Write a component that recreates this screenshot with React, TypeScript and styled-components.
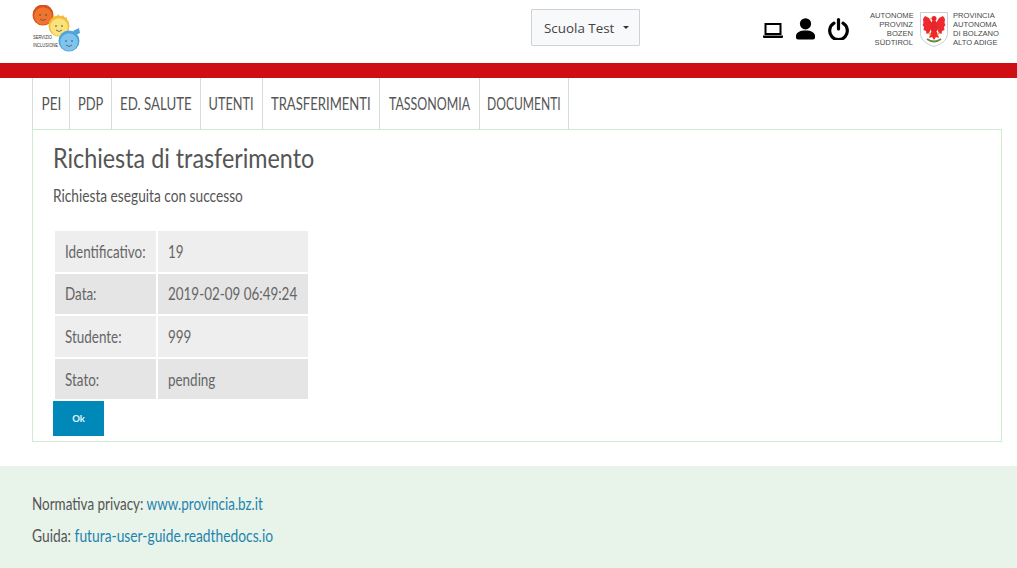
import React from "react";
import styled, { createGlobalStyle } from "styled-components";

const Global = createGlobalStyle`
  html, body { margin: 0; padding: 0; background: #fff; }
  body { font-family: "Lato", "Roboto", "Liberation Sans", sans-serif; color: #555; }
  * { box-sizing: border-box; }
`;

const Page = styled.div`
  width: 1017px;
  height: 568px;
  display: flex;
  flex-direction: column;
  overflow: hidden;
`;
const Header = styled.header`
  height: 63px;
  display: flex;
  align-items: flex-start;
  padding-left: 32px;
`;
const LogoBox = styled.svg`
  width: 50px;
  height: 50px;
  margin-top: 5px;
  flex: none;
`;
const SchoolButton = styled.button`
  margin: 9px 0 0 449px;
  width: 109px;
  height: 37px;
  background: #f8f9fa;
  border: 1px solid #cfd2d4;
  border-radius: 1px;
  display: flex;
  align-items: center;
  padding: 0 0 0 12px;
  font-family: "Open Sans", "Liberation Sans", sans-serif;
  font-size: 13.4px;
  color: #444;
  &::after {
    content: "";
    margin-left: 9px;
    border-top: 3.5px solid #333;
    border-left: 3px solid transparent;
    border-right: 3px solid transparent;
  }
`;
const IconRow = styled.div`
  display: flex;
  align-items: center;
  gap: 13px;
  margin: 18px 0 0 123px;
  height: 22px;
`;
const LaptopSvg = styled.svg`
  margin-top: 3px;
`;
const Province = styled.div`
  margin: 11px 0 0 21px;
  display: flex;
  align-items: center;
  gap: 7px;
  font-family: "Liberation Sans", sans-serif;
  font-size: 7.6px;
  line-height: 9px;
  color: #4a4a4a;
  white-space: pre;
`;
const ProvinceText = styled.div<{ $right?: boolean }>`
  width: 43px;
  margin-left: ${(p) => (p.$right ? "0" : "-2px")};
  text-align: ${(p) => (p.$right ? "right" : "left")};
`;
const RedBar = styled.div`
  height: 15px;
  background: #cf0d15;
  flex: none;
`;
const Main = styled.main`
  padding: 0 15px 0 32px;
  flex: 1;
`;
const Tabs = styled.nav`
  display: flex;
  height: 51px;
  border-left: 1px solid #d8dcd9;
`;
const Tab = styled.a<{ $w: number }>`
  width: ${(p) => p.$w}px;
  border-right: 1px solid #d8dcd9;
  display: flex;
  align-items: center;
  justify-content: center;
  font-size: 17px;
  color: #555;
  padding-bottom: 1px;
  white-space: nowrap;
`;
const TabLabel = styled.span<{ $sx: number }>`
  display: inline-block;
  transform: scaleX(${(p) => p.$sx});
`;
const Panel = styled.section`
  height: 313px;
  border: 1px solid #d0ebd3;
  padding: 12px 20px 0;
`;
const Title = styled.h1`
  margin: 0;
  font-size: 26px;
  line-height: 32px;
  font-weight: 400;
  color: #555;
  white-space: nowrap;
  transform: scaleX(0.897);
  transform-origin: left center;
`;
const Lead = styled.p`
  margin: 12px 0 0;
  font-size: 16.5px;
  line-height: 20px;
  color: #555;
  white-space: nowrap;
  transform: scaleX(0.83);
  transform-origin: left center;
`;
const Table = styled.table`
  margin-top: 23px;
  border-collapse: separate;
  border-spacing: 2px;
  table-layout: fixed;
  width: 257px;
  font-size: 17px;
  color: #666;
`;
const Row = styled.tr<{ $dark?: boolean }>`
  height: 40.6px;
  background: ${(p) => (p.$dark ? "#e5e5e5" : "#eeeeee")};
`;
const LabelCell = styled.td`
  width: 101px;
  padding: 0 0 0 10px;
  white-space: nowrap;
`;
const ValueCell = styled.td`
  width: 150px;
  padding: 0 0 0 10px;
  white-space: nowrap;
`;
const CellText = styled.span`
  display: inline-block;
  transform: scaleX(0.79);
  transform-origin: left center;
`;
const OkButton = styled.button`
  display: block;
  width: 51px;
  height: 35px;
  border: none;
  background: #0088b8;
  color: #e6f6fb;
  font: 700 9.5px "Lato", "Roboto", sans-serif;
`;
const Footer = styled.footer`
  height: 102px;
  flex: none;
  background: #e8f3ea;
  padding: 22px 32px 0;
  font-size: 17px;
  line-height: 32px;
  color: #555;
`;
const FooterLine = styled.div<{ $sx: number }>`
  white-space: nowrap;
  transform: scaleX(${(p) => p.$sx});
  transform-origin: left center;
`;
const FooterLink = styled.a`
  color: #1f83ad;
`;

function Face({ cx, cy, fill, hair }: { cx: number; cy: number; fill: string; hair: string }) {
  return (
    <g>
      <circle cx={cx} cy={cy} r={10.5} fill={hair} />
      <circle cx={cx} cy={cy + 1} r={8.8} fill={fill} />
      <circle cx={cx - 3} cy={cy} r={0.8} fill="#444" />
      <circle cx={cx + 3} cy={cy} r={0.8} fill="#444" />
      <path d={`M${cx - 3} ${cy + 4}q3 3 6 0`} fill="none" stroke="#555" strokeWidth={0.8} />
    </g>
  );
}

const Laptop = () => (
  <LaptopSvg width="20" height="16" viewBox="0 0 20 16">
    <path d="M2.5 1h15v10h-15z" fill="none" stroke="#000" strokeWidth="2" />
    <path d="M0 12.5h20v1.5a1 1 0 0 1-1 1H1a1 1 0 0 1-1-1z" fill="#000" />
  </LaptopSvg>
);
const Person = () => (
  <svg width="19" height="22" viewBox="0 0 19 22">
    <circle cx="9.5" cy="5.800" r="5.600" fill="#000" />
    <path d="M0 19.500v-1.500C0 14.500 4 12.500 9.500 12.500S19 14.500 19 18v1.500a2 2 0 0 1-2 2H2a2 2 0 0 1-2-2z" fill="#000" />
  </svg>
);
const Power = () => (
  <svg width="21" height="22" viewBox="0 0 21 22">
    <path d="M6 5.200a8.800 8.800 0 1 0 9 0" fill="none" stroke="#000" strokeWidth="3.200" strokeLinecap="round" />
    <path d="M10.500 1.600v9.400" fill="none" stroke="#000" strokeWidth="3.200" strokeLinecap="round" />
  </svg>
);
const Crest = () => (
  <svg width="28" height="35" viewBox="0 0 28 35">
    <path d="M.5.5h27v21c0 7-7 11-13.500 13C7.500 32.500.5 28.500.5 21.500z" fill="#fff" stroke="#c5cfd6" />
    <path d="M12 11L9 6 5 4 3 7l.5 4-1 2L4 15l-.5 3L6 19l.5 3L9 21l2-4z" fill="#ee2a2e" />
    <path d="M16 11l3-5 4-2 2 3-.5 4 1 2L24 15l.5 3-2.500 1-.5 3L19 21l-2-4z" fill="#ee2a2e" />
    <ellipse cx="14" cy="15" rx="3.500" ry="7" fill="#e6262c" />
    <circle cx="14" cy="6.500" r="2.500" fill="#e6262c" />
    <path d="M11.800 5.500L9.500 7l2.500.5z" fill="#d8a52c" />
    <path d="M11 20l-2 6 3-1 2 3 2-3 3 1-2-6z" fill="#ee2a2e" />
    <path d="M7 27q7 5 14 0" fill="none" stroke="#6d8a3a" strokeWidth="1.800" />
    <path d="M8.500 21l2.500 2M19.500 21L17 23" stroke="#d8a52c" strokeWidth="1.200" />
  </svg>
);

const tabs: [string, number, number][] = [
  ["PEI", 37, 0.8],
  ["PDP", 42, 0.76],
  ["ED. SALUTE", 89, 0.78],
  ["UTENTI", 62, 0.75],
  ["TRASFERIMENTI", 117, 0.77],
  ["TASSONOMIA", 100, 0.73],
  ["DOCUMENTI", 89, 0.71],
];

const rows: [string, string, boolean][] = [
  ["Identificativo:", "19", false],
  ["Data:", "2019-02-09 06:49:24", true],
  ["Studente:", "999", false],
  ["Stato:", "pending", true],
];

export default function App() {
  return (
    <Page>
      <Global />
      <Header>
        <LogoBox viewBox="0 0 50 50">
          <text x="1" y="34" fontSize="5" textLength="19" lengthAdjust="spacingAndGlyphs" fontFamily="Liberation Sans, sans-serif" fill="#333">SERVIZIO</text>
          <text x="1" y="42" fontSize="5" textLength="25" lengthAdjust="spacingAndGlyphs" fontFamily="Liberation Sans, sans-serif" fill="#333">INCLUSIONE</text>
          <Face cx={11} cy={10} fill="#f0742e" hair="#d9501f" />
          <path d="M20 17l1-7 3 3 2-4 2 4 3-3 2 3 2-1-1 7z" fill="#f2bd3a" />
          <Face cx={27} cy={21} fill="#fbe27a" hair="#f2bd3a" />
          <path d="M41 26l6-3 1 5-4 2z" fill="#4fa3d8" />
          <Face cx={37} cy={36} fill="#7fc4ec" hair="#4fa3d8" />
        </LogoBox>
        <SchoolButton>Scuola Test</SchoolButton>
        <IconRow>
          <Laptop />
          <Person />
          <Power />
        </IconRow>
        <Province>
          <ProvinceText $right>{"AUTONOME\nPROVINZ\nBOZEN\nSÜDTIROL"}</ProvinceText>
          <Crest />
          <ProvinceText>{"PROVINCIA\nAUTONOMA\nDI BOLZANO\nALTO ADIGE"}</ProvinceText>
        </Province>
      </Header>
      <RedBar />
      <Main>
        <Tabs>
          {tabs.map(([t, w, sx]) => (
            <Tab key={t} $w={w}><TabLabel $sx={sx}>{t}</TabLabel></Tab>
          ))}
        </Tabs>
        <Panel>
          <Title>Richiesta di trasferimento</Title>
          <Lead>Richiesta eseguita con successo</Lead>
          <Table>
            <tbody>
              {rows.map(([l, v, d]) => (
                <Row key={l} $dark={d}>
                  <LabelCell><CellText>{l}</CellText></LabelCell>
                  <ValueCell><CellText>{v}</CellText></ValueCell>
                </Row>
              ))}
            </tbody>
          </Table>
          <OkButton>Ok</OkButton>
        </Panel>
      </Main>
      <Footer>
        <FooterLine $sx={0.792}>Normativa privacy: <FooterLink>www.provincia.bz.it</FooterLink></FooterLine>
        <FooterLine $sx={0.812}>Guida: <FooterLink>futura-user-guide.readthedocs.io</FooterLink></FooterLine>
      </Footer>
    </Page>
  );
}
